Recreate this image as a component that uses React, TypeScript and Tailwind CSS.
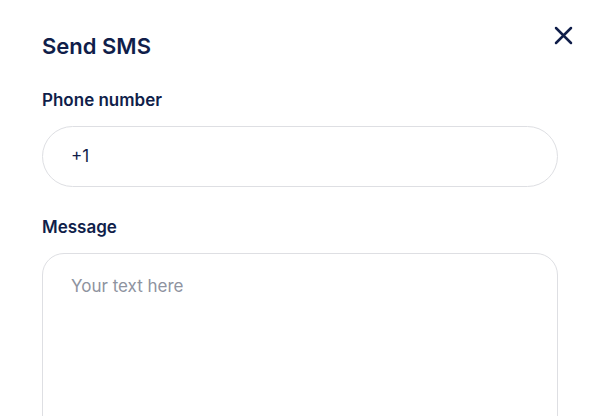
import React from "react";

export default function App() {
  return (
    <div className="w-[600px] h-[416px] bg-white overflow-hidden relative" style={{ fontFamily: "Inter, 'Noto Sans', sans-serif" }}>
      <button className="absolute left-[553px] top-[25px] w-[20px] h-[20px] flex items-center justify-center text-[#101e4a]">
        <svg width="19" height="19" viewBox="0 0 19 19" fill="none" stroke="currentColor" strokeWidth="2.5" strokeLinecap="round">
          <path d="M2 2 L17 17 M17 2 L2 17" />
        </svg>
      </button>
      <div className="px-[42px] pt-[31px] flex flex-col">
        <h1 className="text-[22px] leading-[30px] font-semibold text-[#101e4a]">Send SMS</h1>
        <label className="mt-[29px] text-[17px] leading-[20px] font-semibold text-[#101e4a]">Phone number</label>
        <div className="mt-[16px] w-[516px] h-[61px] rounded-full border border-[#dedfe3] flex items-center pl-[28px] text-[17px] text-[#101e4a]">
          +1
        </div>
        <label className="mt-[30px] text-[17px] leading-[20px] font-semibold text-[#101e4a]">Message</label>
        <div className="mt-[16px] w-[516px] h-[200px] rounded-[22px] border border-[#dedfe3] pl-[28px] pt-[21px] text-[17px] leading-[22px] text-[#8e93a0]">
          Your text here
        </div>
      </div>
    </div>
  );
}
